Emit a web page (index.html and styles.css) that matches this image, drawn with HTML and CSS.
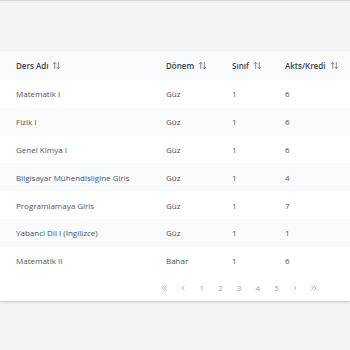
FILE: index.html
```html
<!DOCTYPE html>
<html lang="tr">
<head>
<meta charset="utf-8">
<link rel="stylesheet" href="styles.css">
</head>
<body>
<div class="topline"></div>
<div class="page">
  <div class="card">
    <table class="courses">
      <thead>
        <tr>
          <th class="c1">Ders Adı <svg class="sort" viewBox="0 0 10 10"><path d="M3 8.5V1.5M1.3 3.2L3 1.5L4.7 3.2M7 1.5V8.5M5.3 6.8L7 8.5L8.7 6.8"/></svg></th>
          <th class="c2">Dönem <svg class="sort" viewBox="0 0 10 10"><path d="M3 8.5V1.5M1.3 3.2L3 1.5L4.7 3.2M7 1.5V8.5M5.3 6.8L7 8.5L8.7 6.8"/></svg></th>
          <th class="c3">Sınıf <svg class="sort" viewBox="0 0 10 10"><path d="M3 8.5V1.5M1.3 3.2L3 1.5L4.7 3.2M7 1.5V8.5M5.3 6.8L7 8.5L8.7 6.8"/></svg></th>
          <th class="c4">Akts/Kredi <svg class="sort" viewBox="0 0 10 10"><path d="M3 8.5V1.5M1.3 3.2L3 1.5L4.7 3.2M7 1.5V8.5M5.3 6.8L7 8.5L8.7 6.8"/></svg></th>
        </tr>
      </thead>
      <tbody>
        <tr><td>Matematik I</td><td>Güz</td><td>1</td><td>6</td></tr>
        <tr><td>Fizik I</td><td>Güz</td><td>1</td><td>6</td></tr>
        <tr><td>Genel Kimya I</td><td>Güz</td><td>1</td><td>6</td></tr>
        <tr><td>Bilgisayar Mühendisligine Giris</td><td>Güz</td><td>1</td><td>4</td></tr>
        <tr><td>Programlamaya Giris</td><td>Güz</td><td>1</td><td>7</td></tr>
        <tr><td>Yabanci Dil I (Ingilizce)</td><td>Güz</td><td>1</td><td>1</td></tr>
        <tr><td>Matematik II</td><td>Bahar</td><td>1</td><td>6</td></tr>
      </tbody>
    </table>
    <nav class="pager">
      <span class="pg"><svg class="chev" viewBox="0 0 8 8"><path d="M4 2L2 4L4 6M6.5 2L4.5 4L6.5 6"/></svg></span>
      <span class="pg"><svg class="chev" viewBox="0 0 8 8"><path d="M5 2L3 4L5 6"/></svg></span>
      <span class="pg">1</span>
      <span class="pg">2</span>
      <span class="pg">3</span>
      <span class="pg">4</span>
      <span class="pg">5</span>
      <span class="pg"><svg class="chev" viewBox="0 0 8 8"><path d="M3 2L5 4L3 6"/></svg></span>
      <span class="pg"><svg class="chev" viewBox="0 0 8 8"><path d="M1.5 2L3.5 4L1.5 6M4 2L6 4L4 6"/></svg></span>
    </nav>
  </div>
</div>
</body>
</html>
```
FILE: styles.css
```css
html, body {
  margin: 0;
  padding: 0;
  background: #f3f4f6;
  font-family: "Open Sans", "Noto Sans", sans-serif;
  width: 350px;
  height: 350px;
  overflow: hidden;
}
.topline {
  height: 1px;
  background: #d4d6da;
}
.page {
  padding-top: 50px;
}
.card {
  background: #ffffff;
  box-shadow: 0 1px 2px rgba(0,0,0,0.12), 0 2px 3px rgba(0,0,0,0.05);
}
.courses {
  width: 100%;
  border-collapse: collapse;
  table-layout: fixed;
}
.courses th,
.courses td {
  box-sizing: border-box;
  padding: 0 0 0 16px;
  text-align: left;
  white-space: nowrap;
  font-size: 8px;
}
.courses th {
  background: #f9fafb;
  height: 29px;
  font-weight: 600;
  color: #374151;
}
.courses td {
  height: 27.8px;
  color: #4b5563;
}
.courses tbody tr:nth-child(even) td {
  background: #f9fafb;
}
.c1 { width: 150px; }
.c2 { width: 66px; }
.c3 { width: 53px; }
.sort {
  width: 9px;
  height: 9px;
  margin-left: 2px;
  vertical-align: -1px;
  fill: none;
  stroke: #6b7280;
  stroke-width: 0.9;
  stroke-linecap: round;
  stroke-linejoin: round;
}
.pager {
  height: 26px;
  display: flex;
  align-items: center;
  padding-left: 155px;
}
.pg {
  width: 18.7px;
  display: flex;
  justify-content: center;
  align-items: center;
  font-size: 8px;
  color: #9ca3af;
}
.chev {
  width: 8px;
  height: 8px;
  fill: none;
  stroke: #9ca3af;
  stroke-width: 0.8;
  stroke-linecap: round;
  stroke-linejoin: round;
}
```
